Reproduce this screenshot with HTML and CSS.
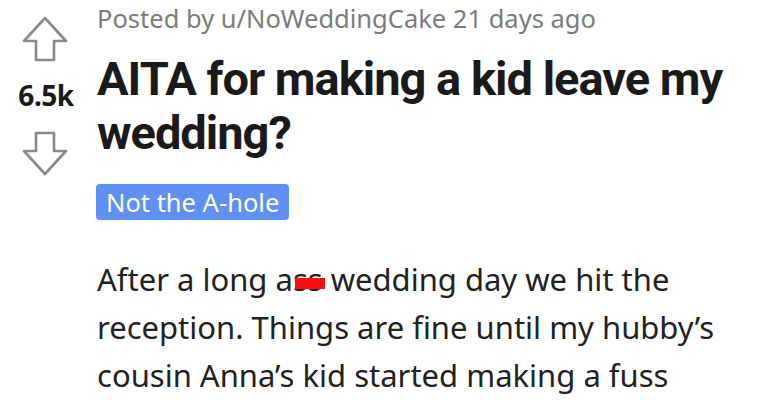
FILE: index.html
```html
<!DOCTYPE html>
<html>
<head>
<meta charset="utf-8">
<link rel="stylesheet" href="styles.css">
</head>
<body>
<div class="post">
  <div class="votes">
    <svg class="arrow up" width="48" height="48" viewBox="0 0 48 48">
      <path d="M23 2 L2 25 L14 25 L14 44 L32 44 L32 25 L44 25 Z" fill="none" stroke="#878a8c" stroke-width="2.6" stroke-linejoin="round"/>
    </svg>
    <div class="score">6.5k</div>
    <svg class="arrow down" width="48" height="48" viewBox="0 0 48 48">
      <path d="M14 2 L14 20 L2 20 L23 43 L44 20 L32 20 L32 2 Z" fill="none" stroke="#878a8c" stroke-width="2.6" stroke-linejoin="round"/>
    </svg>
  </div>
  <div class="content">
    <div class="meta">Posted by u/NoWeddingCake 21 days ago</div>
    <h1 class="title">AITA for making a kid leave my wedding?</h1>
    <span class="flair">Not the A-hole</span>
    <p class="body">After a long a<span class="censor">ss</span> wedding day we hit the reception. Things are fine until my hubby’s cousin Anna’s kid started making a fuss</p>
  </div>
</div>
</body>
</html>
```
FILE: styles.css
```css
html, body {
  margin: 0;
  padding: 0;
  background: #ffffff;
}
body {
  width: 767px;
  height: 400px;
  overflow: hidden;
}
.post {
  display: flex;
  align-items: flex-start;
}
.votes {
  width: 92px;
  flex: none;
  display: flex;
  flex-direction: column;
  align-items: center;
  padding-top: 16px;
}
.arrow {
  display: block;
}
.score {
  font-family: "Noto Sans", sans-serif;
  font-weight: 700;
  font-size: 28px;
  color: #1a1a1b;
  line-height: 30px;
  margin-top: 16px;
  margin-bottom: 21px;
  letter-spacing: -0.5px;
}
.content {
  flex: 1;
  padding-left: 5px;
}
.meta {
  font-family: "Noto Sans", sans-serif;
  font-size: 25.5px;
  color: #7c7c7c;
  line-height: 32px;
  margin-top: 2px;
}
.title {
  font-family: "Roboto", sans-serif;
  font-weight: 700;
  font-size: 47px;
  line-height: 54px;
  color: #1a1a1b;
  margin: 18px 0 0 0;
  letter-spacing: -1px;
  width: 660px;
}
.flair {
  display: inline-block;
  margin-top: 24px;
  margin-left: -1px;
  background: #5f91f5;
  color: #ffffff;
  font-family: "Noto Sans", sans-serif;
  font-size: 25.5px;
  line-height: 36px;
  padding: 0 10px;
  border-radius: 4px;
}
.body {
  font-family: "Noto Sans", sans-serif;
  font-size: 31px;
  line-height: 48px;
  color: #222222;
  margin: 35px 0 0 0;
  width: 665px;
}
.censor {
  position: relative;
}
.censor::after {
  content: "";
  position: absolute;
  left: 2px;
  right: -2px;
  top: 20px;
  height: 11px;
  background: #ff0d0d;
}
```
